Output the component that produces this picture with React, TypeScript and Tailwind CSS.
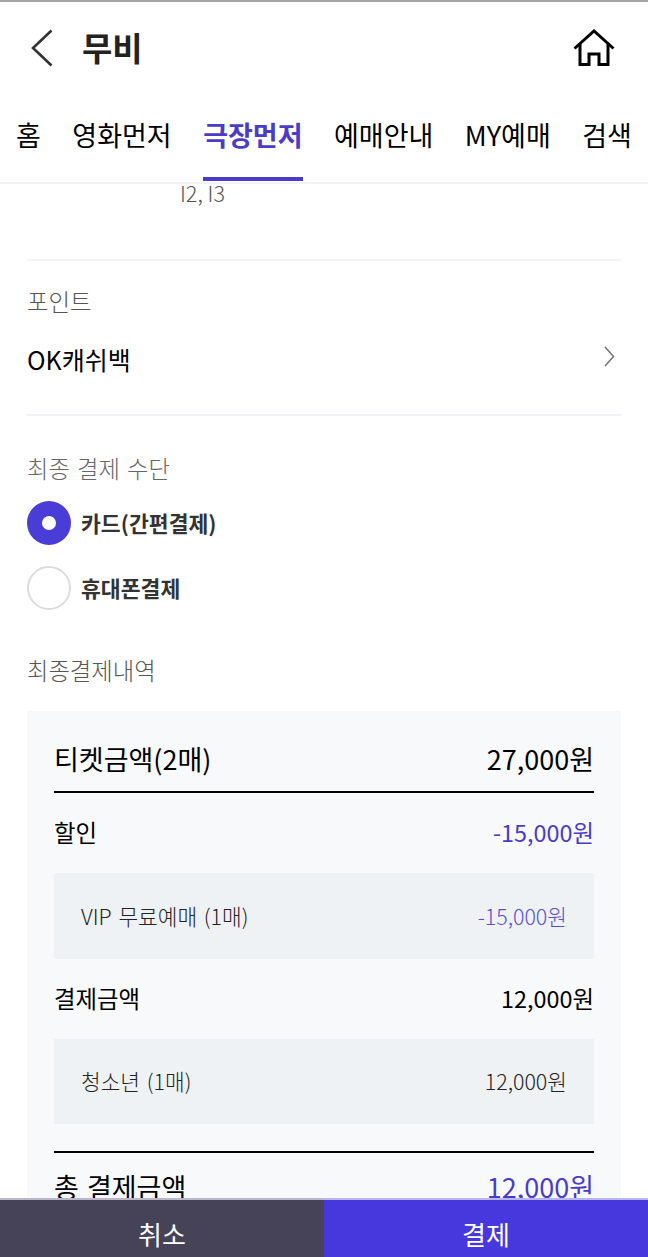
const tabs = ["홈", "영화먼저", "극장먼저", "예매안내", "MY예매", "검색"];

function HomeIcon() {
  return (
    <svg width="42" height="38" viewBox="0 0 42 38" fill="none" stroke="#000" strokeWidth="3">
      <path d="M1.5 19.5 L21 2 L40.5 19.5" />
      <path d="M7 14.5 V35.5 H16 V25 H26 V35.5 H35 V14.5" />
    </svg>
  );
}

function Row({ label, value, className }: { label: string; value: string; className: string }) {
  return (
    <div className={`flex items-center justify-between [word-spacing:2px] ${className}`}>
      <span>{label}</span>
      <span>{value}</span>
    </div>
  );
}

export default function App() {
  return (
    <div className="flex h-[1257px] w-[648px] flex-col overflow-hidden bg-white font-['Noto_Sans_CJK_KR',sans-serif] text-black">
      <header className="h-[184px] shrink-0 border-t-2 border-b-2 border-t-[#a3a3a3] border-b-[#f0f2f5]">
        <div className="flex h-[92px] items-center justify-between pl-[31px] pr-[33px]">
          <div className="flex items-center gap-[29px]">
            <svg width="22" height="38" viewBox="0 0 22 38" fill="none" stroke="#333" strokeWidth="2.6">
              <path d="M20.5 1.5 L2 19 L20.5 36.5" />
            </svg>
            <span className="text-[33px] font-bold text-[#222]">무비</span>
          </div>
          <HomeIcon />
        </div>
        <nav className="flex h-[87px] items-stretch justify-between px-[16px]">
          {tabs.map((t) => (
            <div
              key={t}
              className={
                t === "극장먼저"
                  ? "flex items-center border-b-4 border-[#4a3cc9] text-[27px] font-bold text-[#4a3cc9]"
                  : "flex items-center border-b-4 border-transparent text-[27px]"
              }
            >
              {t}
            </div>
          ))}
        </nav>
      </header>

      <main className="min-h-0 flex-1 overflow-hidden px-[27px]">
        <div className="h-[22px] pl-[153px] text-[21.6px] leading-[18px] font-light text-[#555]">I2, I3</div>
        <div className="mt-[53px] border-t-2 border-[#f0f2f5] pt-[24px]">
          <div className="text-[23.4px] leading-[32px] font-light text-[#555]">포인트</div>
          <div className="mt-[23px] flex h-[40px] items-center justify-between">
            <span className="text-[25px]">OK캐쉬백</span>
            <svg className="mr-[6px] mb-[8px]" width="11" height="21" viewBox="0 0 11 21" fill="none" stroke="#777" strokeWidth="1.6">
              <path d="M1 1 L9.5 10.5 L1 20" />
            </svg>
          </div>
        </div>
        <div className="mt-[34px] border-t-2 border-[#f0f2f5] pt-[36px]">
          <div className="text-[23.3px] leading-[32px] font-light text-[#666] [word-spacing:2px]">최종 결제 수단</div>
          <div className="mt-[17px] flex items-center gap-[10px]">
            <div className="flex h-[44px] w-[44px] items-center justify-center rounded-full bg-[#4a3cd6]">
              <div className="h-[14px] w-[14px] rounded-full bg-white" />
            </div>
            <span className="text-[21.6px] font-bold text-[#333]">카드(간편결제)</span>
          </div>
          <div className="mt-[21px] flex items-center gap-[10px]">
            <div className="h-[44px] w-[44px] rounded-full border-2 border-[#dcdcdc]" />
            <span className="text-[21.6px] font-bold text-[#333]">휴대폰결제</span>
          </div>
        </div>
        <div className="mt-[44px] text-[23.3px] leading-[32px] font-light text-[#555]">최종결제내역</div>
        <section className="mt-[25px] bg-[#f8f9fb] px-[27px]">
          <Row label="티켓금액(2매)" value="27,000원" className="h-[82px] border-b-2 border-black pt-[16px] text-[27px]" />
          <Row label="할인" value="-15,000원" className="h-[80px] text-[23.4px] [&>span:last-child]:text-[#4a3cc9]" />
          <Row label="VIP 무료예매 (1매)" value="-15,000원" className="h-[86px] bg-[#eff2f5] px-[27px] text-[21.4px] font-light text-[#222] [&>span:last-child]:text-[#5a4fc9]" />
          <Row label="결제금액" value="12,000원" className="h-[80px] text-[23.4px]" />
          <Row label="청소년 (1매)" value="12,000원" className="h-[85px] bg-[#eff2f5] px-[27px] text-[21.4px] font-light text-[#222]" />
          <div className="mt-[27px] border-t-2 border-black" />
          <Row label="총 결제금액" value="12,000원" className="h-[68px] text-[27px] [&>span:last-child]:text-[#4a3cc9]" />
        </section>
      </main>

      <footer className="flex h-[59px] shrink-0 text-[26px] text-white">
        <div className="flex w-1/2 items-center justify-center border-t-2 border-[#b9b7c9] bg-[#464258] pt-[10px]">취소</div>
        <div className="flex w-1/2 items-center justify-center border-t-2 border-[#b9b5ee] bg-[#4738dd] pt-[10px]">결제</div>
      </footer>
    </div>
  );
}
